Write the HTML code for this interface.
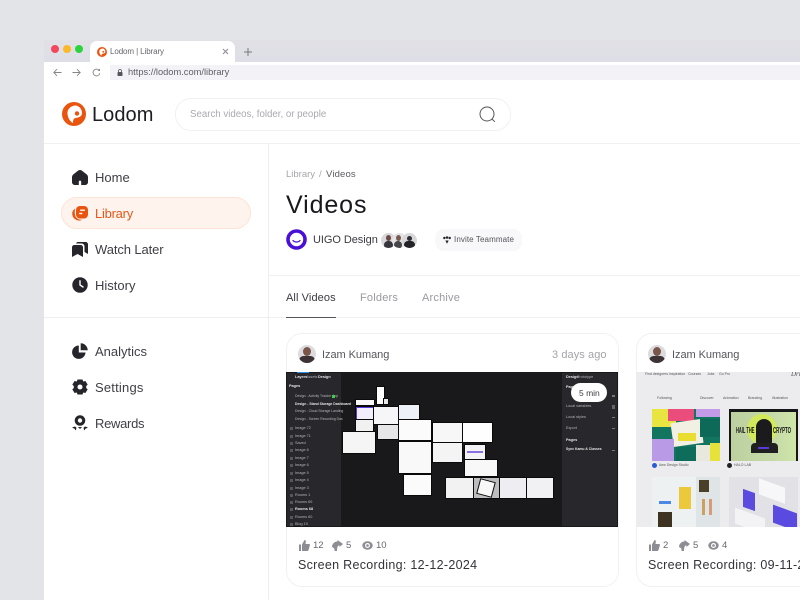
<!DOCTYPE html>
<html><head><meta charset="utf-8">
<style>
html,body{margin:0;padding:0}
body{width:800px;height:600px;overflow:hidden;position:relative;background:#e3e4e8;font-family:"Liberation Sans",sans-serif;color:#2a2a30}
.a{position:absolute}
.t{position:absolute;white-space:nowrap;line-height:1}
.nav{font-size:13px;color:#3e3e46}
.r{position:absolute;background:#fff}
svg{position:absolute;overflow:visible}
.av{position:absolute;border-radius:50%;overflow:hidden}
.w{position:absolute;background:#f9f9fa;box-shadow:0 0 0 1px #0a0a0b}
.m{position:absolute;white-space:nowrap;line-height:1;font-size:3.800px;color:#b5b5b9}
.b{color:#e4e4e6;font-weight:bold}
.i{position:absolute;left:4px;width:3px;height:3px;background:#55555a}
</style></head><body>
<div class="a" style="left:44px;top:40px;width:756px;height:23px;background:linear-gradient(#e0e0e5,#dedee6)"></div>
<div class="a" style="left:90px;top:41px;width:145px;height:22px;background:#fff;border-radius:7px 7px 0 0"></div>
<div class="a" style="left:51px;top:45px;width:8px;height:8px;border-radius:50%;background:#f4475b"></div>
<div class="a" style="left:63px;top:45px;width:8px;height:8px;border-radius:50%;background:#fbb829"></div>
<div class="a" style="left:75px;top:45px;width:8px;height:8px;border-radius:50%;background:#2bd43c"></div>
<svg style="left:97px;top:47px" width="10" height="10" viewBox="0 0 24 24"><circle cx="12" cy="12" r="12" fill="#e9540f"/><path d="M13 3.500C8 4 5 8 5.500 12 6 16 8 19.500 11 21c0-3 .5-4.500 2.500-5 3.500-.5 6.500-1.500 6.500-5 0-4-3-7.500-7-7.500z" fill="#fff"/><circle cx="15" cy="11.500" r="2.200" fill="#e9540f"/></svg>
<div class="t" style="left:110px;top:48px;font-size:8px;color:#66666c;letter-spacing:-.1px">Lodom | Library</div>
<svg style="left:222px;top:48px" width="7" height="7" viewBox="0 0 7 7"><path d="M1 1l5 5M6 1L1 6" stroke="#8a8a90" stroke-width="1"/></svg>
<svg style="left:244px;top:48px" width="8" height="8" viewBox="0 0 8 8"><path d="M4 0v8M0 4h8" stroke="#77777d" stroke-width="1"/></svg>

<div class="r" style="left:44px;top:62px;width:756px;height:538px"></div>
<div class="a" style="left:110px;top:65px;width:690px;height:15px;background:#f2f2f7"></div>
<svg style="left:53px;top:68px" width="9" height="9" viewBox="0 0 9 9"><path d="M8.500 4.500H.8M4 1.200L.8 4.500 4 7.800" fill="none" stroke="#85858b" stroke-width=".9"/></svg>
<svg style="left:72px;top:68px" width="9" height="9" viewBox="0 0 9 9"><path d="M.5 4.500h7.700M5 1.200l3.200 3.300L5 7.800" fill="none" stroke="#85858b" stroke-width=".9"/></svg>
<svg style="left:92px;top:68px" width="9" height="9" viewBox="0 0 9 9"><path d="M7.800 5.200A3.400 3.400 0 1 1 7 2.200" fill="none" stroke="#85858b" stroke-width=".9"/><path d="M8 .5v2.500H5.500z" fill="#85858b"/></svg>
<svg style="left:117px;top:69px" width="6" height="7" viewBox="0 0 6 7"><rect x=".5" y="3" width="5" height="4" rx=".8" fill="#55555c"/><path d="M1.500 3V2a1.500 1.500 0 0 1 3 0v1" fill="none" stroke="#55555c" stroke-width=".8"/></svg>
<div class="t" style="left:128px;top:68px;font-size:9.300px;color:#5e5e64">https://lodom.com/library</div>

<svg style="left:62px;top:102px" width="24" height="24" viewBox="0 0 24 24"><circle cx="12" cy="12" r="12" fill="#e9540f"/><path d="M13 3.500C8 4 5 8 5.500 12 6 16 8 19.500 11 21c0-3 .5-4.500 2.500-5 3.500-.5 6.500-1.500 6.500-5 0-4-3-7.500-7-7.500z" fill="#fff"/><circle cx="15" cy="11.500" r="2.200" fill="#e9540f"/></svg>
<div class="t" style="left:92px;top:105px;font-size:20px;color:#1c1c22;letter-spacing:.05px">Lodom</div>

<div class="a" style="left:175px;top:98px;width:336px;height:33px;box-sizing:border-box;border:1px solid #f1f1f5;border-radius:16px;background:#fff"></div>
<div class="t" style="left:190px;top:110px;font-size:9.700px;color:#a9a9b0">Search videos, folder, or people</div>
<svg style="left:479px;top:106px" width="17" height="17" viewBox="0 0 17 17"><circle cx="8" cy="8" r="7" fill="none" stroke="#55555b" stroke-width="1"/><path d="M13 13l2.800 2.800" stroke="#55555b" stroke-width="1"/></svg>

<div class="a" style="left:44px;top:143px;width:756px;height:1px;background:#f0f0f3"></div>
<div class="a" style="left:268px;top:144px;width:1px;height:456px;background:#eeeef2"></div>
<div class="a" style="left:44px;top:317px;width:224px;height:1px;background:#eeeef2"></div>

<svg style="left:72px;top:170px" width="16" height="15" viewBox="0 0 16 15"><path d="M8 0C6.800 0 5.800 .9 4.700 1.700L1.500 4.200C.5 5 0 6 0 7.200V12c0 1.800 1.200 3 3 3h3.800v-3.200a1.200 1.200 0 0 1 2.400 0V15H13c1.800 0 3-1.200 3-3V7.200c0-1.200-.5-2.200-1.500-3l-3.200-2.500C10.200 .9 9.200 0 8 0z" fill="#25252b"/></svg>
<div class="t nav" style="left:95px;top:171px">Home</div>

<div class="a" style="left:61px;top:197px;width:190px;height:32px;box-sizing:border-box;background:#fff4ed;border:1px solid #fde3d4;border-radius:16px"></div>
<svg style="left:72px;top:206px" width="16" height="15" viewBox="0 0 16 15"><rect x="4" y="0" width="12" height="12.500" rx="4" fill="#e9540f"/><path d="M3 2.500C1 4 0 6 .3 8.500.7 11.500 3 14 6.500 14.500c1.500.2 2.500 0 3.500-.7-3 0-5.300-1-6.500-3.300C2.500 8 2.700 5 3 2.500z" fill="#e9540f"/><rect x="8" y="3.500" width="5" height="1.400" rx=".7" fill="#fff"/><rect x="7" y="6.800" width="3.500" height="1.400" rx=".7" fill="#fff"/></svg>
<div class="t nav" style="left:95px;top:207px;color:#e4571b;letter-spacing:-.25px">Library</div>

<svg style="left:72px;top:242px" width="16" height="15" viewBox="0 0 16 15"><path d="M0 5.500C0 4 1 3 2.500 3h6C10 3 11 4 11 5.500V15l-5.500-3L0 15z" fill="#25252b"/><path d="M4 1.500C4.300.6 5 0 6 0h7.500C15 0 16 1 16 2.500V12l-3.500-2V4.500C12.500 2.700 11.300 1.500 9.500 1.500z" fill="#25252b"/></svg>
<div class="t nav" style="left:95px;top:243px;letter-spacing:-.1px">Watch Later</div>

<svg style="left:72px;top:277px" width="16" height="16" viewBox="0 0 16 16"><circle cx="8" cy="8" r="7.700" fill="#25252b"/><path d="M8 3.800V8l3 2" fill="none" stroke="#fff" stroke-width="1.400" stroke-linecap="round"/></svg>
<div class="t nav" style="left:95px;top:279px">History</div>

<svg style="left:72px;top:343px" width="16" height="16" viewBox="0 0 16 16"><path d="M6.800 2.500A6.700 6.700 0 1 0 13.500 9.500H6.800z" fill="#25252b"/><path d="M8.700 0.300a7 7 0 0 1 7 7H8.700z" fill="#25252b"/></svg>
<div class="t nav" style="left:95px;top:345px">Analytics</div>

<svg style="left:72px;top:379px" width="16" height="16" viewBox="0 0 16 16"><path d="M5.500 .5h5l.7 2 2.200-.5 2.300 3.600-1.500 1.400v2l1.500 1.400-2.300 3.600-2.200-.5-.7 2h-5l-.7-2-2.200.5L.3 10.400 1.800 9V7L.3 5.600 2.600 2l2.200.5z" fill="#25252b"/><circle cx="8" cy="8" r="2.500" fill="#fff"/></svg>
<div class="t nav" style="left:95px;top:381px;letter-spacing:.2px">Settings</div>

<svg style="left:72px;top:415px" width="16" height="16" viewBox="0 0 16 16"><circle cx="8" cy="5.500" r="5.300" fill="#25252b"/><circle cx="8" cy="5.500" r="2.200" fill="#fff"/><path d="M0 12.500l3-1 1.500 1.300-.7 2.700-1.300-1.700zM16 12.500l-3-1-1.500 1.300.7 2.700 1.300-1.700zM6 12h4l-2 2z" fill="#25252b"/></svg>
<div class="t nav" style="left:95px;top:417px;letter-spacing:-.3px">Rewards</div>

<div class="t" style="left:286px;top:170px;font-size:9.500px;color:#a6a6ad">Library</div>
<div class="t" style="left:319px;top:170px;font-size:9.500px;color:#a6a6ad">/</div>
<div class="t" style="left:326px;top:170px;font-size:9.500px;color:#5a5a61;letter-spacing:.15px">Videos</div>
<div class="t" style="left:286px;top:193px;font-size:25px;color:#18181d;letter-spacing:.9px">Videos</div>

<svg style="left:286px;top:229px" width="21" height="21" viewBox="0 0 21 21"><circle cx="10.500" cy="10.500" r="10.300" fill="#4a0fd6"/><circle cx="10.500" cy="10.500" r="6.700" fill="#fff"/><path d="M7 11.500c1.500 2 5.500 2 7 0" fill="none" stroke="#4a0fd6" stroke-width="1.200" stroke-linecap="round"/></svg>
<div class="t" style="left:313px;top:235px;font-size:11px;color:#3a3a41;letter-spacing:-.06px">UIGO Design</div>

<div class="av" style="left:381px;top:233px;width:15px;height:15px;background:#d9d8dc"><div class="a" style="left:5px;top:2px;width:5px;height:6px;border-radius:50%;background:#6a4a42"></div><div class="a" style="left:3px;top:8px;width:9px;height:8px;border-radius:4px;background:#35353b"></div></div>
<div class="av" style="left:392px;top:233px;width:15px;height:15px;background:#e6e5e6"><div class="a" style="left:4px;top:2px;width:5px;height:6px;border-radius:50%;background:#7a5a50"></div><div class="a" style="left:2px;top:8px;width:8px;height:8px;border-radius:4px;background:#45454a"></div></div>
<div class="av" style="left:402px;top:233px;width:15px;height:15px;background:#d8d8db"><div class="a" style="left:5px;top:3px;width:5px;height:5px;border-radius:50%;background:#2e2e33"></div><div class="a" style="left:2px;top:8px;width:11px;height:8px;border-radius:5px;background:#222227"></div></div>

<div class="a" style="left:435px;top:229px;width:87px;height:22px;background:#f8f8fa;border-radius:9px"></div>
<svg style="left:443px;top:236px" width="8" height="8" viewBox="0 0 8 8"><circle cx="1.300" cy="2" r="1.200" fill="#26262c"/><circle cx="4" cy="1.500" r="1.300" fill="#26262c"/><circle cx="6.700" cy="2" r="1.200" fill="#26262c"/><path d="M2.300 4.500h3.400L4 7.800z" fill="#26262c"/></svg>
<div class="t" style="left:454px;top:236px;font-size:8px;color:#55555c;letter-spacing:.1px">Invite Teammate</div>

<div class="a" style="left:269px;top:275px;width:531px;height:1px;background:#f1f1f4"></div>
<div class="t" style="left:286px;top:293px;font-size:11px;color:#3a3a41;letter-spacing:.1px">All Videos</div>
<div class="t" style="left:360px;top:293px;font-size:11px;color:#9a9aa1;letter-spacing:.2px">Folders</div>
<div class="t" style="left:422px;top:293px;font-size:11px;color:#9a9aa1;letter-spacing:.2px">Archive</div>
<div class="a" style="left:269px;top:317px;width:531px;height:1px;background:#f1f1f4"></div>
<div class="a" style="left:286px;top:316.500px;width:50px;height:1.500px;background:#55555c"></div>

<!-- card 1 -->
<div class="a" style="left:286px;top:333px;width:333px;height:254px;box-sizing:border-box;border:1px solid #f1f1f4;border-radius:16px;background:#fff"></div>
<div class="av" style="left:298px;top:345px;width:18px;height:18px;background:#dcdbe0"><div class="a" style="left:5px;top:2px;width:8px;height:9px;border-radius:50%;background:#7a5648"></div><div class="a" style="left:1px;top:11px;width:16px;height:9px;border-radius:6px;background:#3d3236"></div></div>
<div class="t" style="left:322px;top:350px;font-size:11px;color:#55555c;letter-spacing:-.05px">Izam Kumang</div>
<div class="t" style="left:552px;top:350px;font-size:11px;color:#a3a3aa;letter-spacing:.08px">3 days ago</div>

<div class="a" style="left:286px;top:372px;width:332px;height:155px;background:#19191b;overflow:hidden;filter:blur(.35px)">
 <div class="a" style="left:1px;top:1px;width:54px;height:153px;background:#28282c"></div>
 <div class="a" style="left:276px;top:1px;width:55px;height:153px;background:#28282c"></div>
 <div class="a" style="left:11px;top:0;width:12px;height:1px;background:#2a8de0"></div>
 <div class="m b" style="left:9px;top:4px">Layers</div><div class="m" style="left:20px;top:4px">Assets</div><div class="m b" style="left:32px;top:4px">Design</div>
 <div class="m b" style="left:3px;top:13px">Pages</div>
 <div class="m" style="left:9px;top:23px;font-size:3.400px">Design - Activity Tracker App</div>
 <div class="a" style="left:46px;top:23px;width:3px;height:3px;background:#3ecf4a"></div>
 <div class="m b" style="left:9px;top:31px;font-size:3.400px">Design - Stand Storage Dashboard</div>
 <div class="m" style="left:9px;top:38px;font-size:3.400px">Design - Cloud Storage Landing</div>
 <div class="m" style="left:9px;top:46px;font-size:3.400px">Design - Screen Recording Das</div>
 <div class="m" style="left:9px;top:55px">Image 72</div><div class="i" style="top:55px"></div>
 <div class="m" style="left:9px;top:63px">Image 71</div><div class="i" style="top:63px"></div>
 <div class="m" style="left:9px;top:70px">Saved</div><div class="i" style="top:70px"></div>
 <div class="m" style="left:9px;top:77px">Image 6</div><div class="i" style="top:77px"></div>
 <div class="m" style="left:9px;top:85px">Image 7</div><div class="i" style="top:85px"></div>
 <div class="m" style="left:9px;top:92px">Image 6</div><div class="i" style="top:92px"></div>
 <div class="m" style="left:9px;top:100px">Image 5</div><div class="i" style="top:100px"></div>
 <div class="m" style="left:9px;top:107px">Image 4</div><div class="i" style="top:107px"></div>
 <div class="m" style="left:9px;top:115px">Image 3</div><div class="i" style="top:115px"></div>
 <div class="m" style="left:9px;top:122px">Rooms 1</div><div class="i" style="top:122px"></div>
 <div class="m" style="left:9px;top:129px">Rooms 69</div><div class="i" style="top:129px"></div>
 <div class="m b" style="left:9px;top:136px">Rooms 68</div><div class="i" style="top:136px"></div>
 <div class="m" style="left:9px;top:144px">Rooms 60</div><div class="i" style="top:144px"></div>
 <div class="m" style="left:9px;top:151px">Blog 19</div><div class="i" style="top:151px"></div>

 <!-- frames: positions relative to thumbnail -->
 <div class="w" style="left:70px;top:28px;width:18px;height:5px"></div>
 <div class="w" style="left:91px;top:15px;width:7px;height:17px;background:#fff"></div>
 <div class="w" style="left:98px;top:27px;width:4px;height:5px;background:#e8e8e8"></div>
 <div class="w" style="left:70px;top:35px;width:17px;height:13px;background:#f3eefc;border-top:1.500px solid #5a3ad8;border-left:1px solid #5a3ad8;box-sizing:border-box"></div>
 <div class="w" style="left:70px;top:48px;width:17px;height:12px;background:#f1f1f2"></div>
 <div class="w" style="left:57px;top:60px;width:32px;height:21px;background:#f5f5f6"></div>
 <div class="w" style="left:88px;top:35px;width:24px;height:17px;background:#f6f6f8"></div>
 <div class="w" style="left:92px;top:53px;width:20px;height:14px;background:#e6e6e8"></div>
 <div class="w" style="left:113px;top:33px;width:20px;height:14px;background:#eef1f8"></div>
 <div class="w" style="left:113px;top:48px;width:32px;height:20px;background:#fbfbfc"></div>
 <div class="w" style="left:113px;top:70px;width:32px;height:31px;background:#f9f9f9"></div>
 <div class="w" style="left:118px;top:103px;width:27px;height:20px;background:#fbfbfb"></div>
 <div class="w" style="left:147px;top:51px;width:29px;height:19px;background:#f7f7f8"></div>
 <div class="w" style="left:177px;top:51px;width:29px;height:19px;background:#fefefe"></div>
 <div class="w" style="left:147px;top:71px;width:29px;height:19px;background:#f4f4f5"></div>
 <div class="w" style="left:179px;top:73px;width:20px;height:15px;background:#f3f3f6"></div>
 <div class="a" style="left:181px;top:79px;width:16px;height:2px;background:#8a6fe0"></div>
 <div class="w" style="left:179px;top:88px;width:32px;height:16px;background:#f8f8f8"></div>
 <div class="w" style="left:160px;top:106px;width:27px;height:20px;background:#f2f2f3"></div>
 <div class="w" style="left:188px;top:106px;width:25px;height:20px;background:#bdbdc0"></div>
 <div class="w" style="left:193px;top:109px;width:14px;height:14px;background:#f8f8f8;transform:rotate(15deg)"></div>
 <div class="w" style="left:214px;top:106px;width:27px;height:20px;background:#eeeef2"></div>
 <div class="w" style="left:241px;top:106px;width:26px;height:20px;background:#f1f1f3"></div>

 <div class="m b" style="left:280px;top:4px">Design</div><div class="m" style="left:291px;top:4px">Prototype</div>
 <div class="m b" style="left:280px;top:14px">Page</div>
 <div class="m" style="left:280px;top:33px">Local variables</div>
 <div class="m" style="left:280px;top:44px">Local styles</div>
 <div class="m" style="left:280px;top:55px">Export</div>
 <div class="m b" style="left:280px;top:67px">Pages</div>
 <div class="m b" style="left:280px;top:76px;font-size:3.400px">Sync Kamu &amp; Classes</div>
 <div class="a" style="left:326px;top:23px;width:3px;height:2px;background:#777"></div>
 <div class="a" style="left:326px;top:33px;width:3px;height:4px;background:#666"></div>
 <div class="a" style="left:326px;top:45px;width:3px;height:1px;background:#777"></div>
 <div class="a" style="left:326px;top:56px;width:3px;height:1px;background:#777"></div>
 <div class="a" style="left:326px;top:78px;width:3px;height:1px;background:#777"></div>
</div>
<div class="a" style="left:571px;top:383px;width:36px;height:19px;background:#fff;border-radius:10px"></div>
<div class="t" style="left:579px;top:389px;font-size:8.500px;color:#3d3d44">5 min</div>

<svg style="left:299px;top:540px" width="11" height="11" viewBox="0 0 11 11"><path d="M0 4.500h2V11H0zM3 4.500L5.500 0c1 0 1.500.8 1.300 1.800L6.500 4H10c.8 0 1.100.7.900 1.300L9.500 10c-.2.600-.6 1-1.300 1H3z" fill="#8d8d94"/></svg>
<div class="t" style="left:313px;top:541px;font-size:9.500px;color:#66666d">12</div>
<svg style="left:332px;top:540px" width="11" height="11" viewBox="0 0 11 11"><path d="M0 7A5.500 5.500 0 0 1 5.500 1.500V0L11 4 7.500 7V5.500C6 5 5 7 5 11H2.500C2.800 9.500 2.500 8 0 7z" fill="#8d8d94"/></svg>
<div class="t" style="left:346px;top:541px;font-size:9.500px;color:#66666d">5</div>
<svg style="left:362px;top:541px" width="11" height="9" viewBox="0 0 11 9"><ellipse cx="5.500" cy="4.500" rx="5.200" ry="4.200" fill="#8d8d94"/><circle cx="5.500" cy="4.500" r="2.500" fill="#fff"/><circle cx="5.500" cy="4.500" r="1.300" fill="#8d8d94"/></svg>
<div class="t" style="left:376px;top:541px;font-size:9.500px;color:#66666d">10</div>
<div class="t" style="left:298px;top:559px;font-size:12.500px;color:#33333a;letter-spacing:.3px">Screen Recording: 12-12-2024</div>

<!-- card 2 -->
<div class="a" style="left:636px;top:333px;width:190px;height:254px;box-sizing:border-box;border:1px solid #f1f1f4;border-radius:16px;background:#fff"></div>
<div class="av" style="left:648px;top:345px;width:18px;height:18px;background:#dcdbe0"><div class="a" style="left:5px;top:2px;width:8px;height:9px;border-radius:50%;background:#7a5648"></div><div class="a" style="left:1px;top:11px;width:16px;height:9px;border-radius:6px;background:#3d3236"></div></div>
<div class="t" style="left:672px;top:350px;font-size:11px;color:#55555c;letter-spacing:-.05px">Izam Kumang</div>

<div class="a" style="left:636px;top:372px;width:164px;height:155px;background:#ececef;overflow:hidden;filter:blur(.35px)">
 <div class="t" style="left:9px;top:1px;font-size:3.500px;color:#555">Find designers</div>
 <div class="t" style="left:33px;top:1px;font-size:3.500px;color:#555">Inspiration</div>
 <div class="t" style="left:52px;top:1px;font-size:3.500px;color:#555">Courses</div>
 <div class="t" style="left:71px;top:1px;font-size:3.500px;color:#555">Jobs</div>
 <div class="t" style="left:83px;top:1px;font-size:3.500px;color:#555">Go Pro</div>
 <div class="t" style="left:155px;top:-1px;font-size:7px;font-family:'Liberation Serif',serif;font-style:italic;color:#555">Dri</div>
 <div class="t" style="left:21px;top:25px;font-size:3.500px;color:#555">Following</div>
 <div class="t" style="left:64px;top:25px;font-size:3.500px;color:#555">Discover</div>
 <div class="t" style="left:87px;top:25px;font-size:3.500px;color:#555">Animation</div>
 <div class="t" style="left:112px;top:25px;font-size:3.500px;color:#555">Branding</div>
 <div class="t" style="left:136px;top:25px;font-size:3.500px;color:#555">Illustration</div>
 <div class="a" style="left:16px;top:37px;width:68px;height:52px;background:#12755f;overflow:hidden">
  <div class="a" style="left:0;top:0;width:24px;height:18px;background:#e8e440"></div>
  <div class="a" style="left:16px;top:0;width:26px;height:12px;background:#ea4d7c"></div>
  <div class="a" style="left:44px;top:0;width:24px;height:8px;background:#c39be8"></div>
  <div class="a" style="left:20px;top:12px;width:30px;height:24px;background:#f2efe3;transform:rotate(-8deg)"></div>
  <div class="a" style="left:26px;top:24px;width:18px;height:8px;background:#e9dd2f"></div>
  <div class="a" style="left:48px;top:10px;width:20px;height:18px;background:#0d6a58"></div>
  <div class="a" style="left:0;top:30px;width:22px;height:22px;background:#b89ae6"></div>
  <div class="a" style="left:24px;top:38px;width:22px;height:14px;background:#0e6d5a"></div>
  <div class="a" style="left:44px;top:36px;width:24px;height:16px;background:#e8e8dc"></div>
  <div class="a" style="left:58px;top:34px;width:10px;height:18px;background:#e7e23a"></div>
 </div>
 <div class="a" style="left:16px;top:91px;width:5px;height:5px;border-radius:50%;background:#2a5bd8"></div>
 <div class="t" style="left:23px;top:92px;font-size:3.500px;color:#555">Aew Design Studio</div>
 <div class="a" style="left:93px;top:37px;width:69px;height:52px;background:#151618;overflow:hidden">
  <div class="a" style="left:2px;top:3px;width:65px;height:49px;background:linear-gradient(90deg,#bed0a0,#c4d8a8 60%,#cfe6a8)"></div>
  <div class="a" style="left:18px;top:5px;width:30px;height:30px;border-radius:50%;background:#d6ee4a;opacity:.8"></div>
  <div class="a" style="left:27px;top:10px;width:16px;height:26px;border-radius:8px 8px 3px 3px;background:#1b1b1d"></div>
  <div class="a" style="left:22px;top:34px;width:27px;height:10px;border-radius:4px 4px 0 0;background:#1f1f22"></div>
  <div class="t" style="left:7px;top:18px;font-size:8px;font-weight:bold;color:#141414;transform:scaleX(.5);transform-origin:left">HAIL THE</div>
  <div class="t" style="left:44px;top:18px;font-size:8px;font-weight:bold;color:#141414;transform:scaleX(.55);transform-origin:left">CRYPTO</div>
  <div class="a" style="left:29px;top:38px;width:11px;height:2px;background:#5a3ad8"></div>
 </div>
 <div class="a" style="left:91px;top:91px;width:5px;height:5px;border-radius:50%;background:#222"></div>
 <div class="t" style="left:98px;top:92px;font-size:3.500px;color:#555">HALO LAB</div>
 <div class="a" style="left:16px;top:105px;width:68px;height:50px;background:#dfe5e6;overflow:hidden">
  <div class="a" style="left:0;top:0;width:44px;height:50px;background:#eef1f2"></div>
  <div class="a" style="left:27px;top:10px;width:12px;height:22px;background:#ecc93a"></div>
  <div class="a" style="left:7px;top:24px;width:12px;height:3px;background:#4a8ae6"></div>
  <div class="a" style="left:6px;top:35px;width:14px;height:15px;background:#3d3320"></div>
  <div class="a" style="left:47px;top:3px;width:10px;height:12px;background:#4a4028"></div>
  <div class="a" style="left:50px;top:22px;width:3px;height:16px;background:#cba061"></div>
  <div class="a" style="left:57px;top:22px;width:3px;height:16px;background:#d89b7a"></div>
 </div>
 <div class="a" style="left:93px;top:105px;width:69px;height:50px;background:#e2e2e6;overflow:hidden">
  <div class="a" style="left:14px;top:14px;width:12px;height:18px;background:#5b4adf;transform:skewY(20deg)"></div>
  <div class="a" style="left:44px;top:32px;width:24px;height:18px;background:#5b4adf;transform:skewY(20deg)"></div>
  <div class="a" style="left:30px;top:6px;width:26px;height:16px;background:#f7f7f9;transform:skewY(20deg)"></div>
  <div class="a" style="left:6px;top:36px;width:30px;height:16px;background:#f3f3f5;transform:skewY(20deg)"></div>
 </div>
</div>

<svg style="left:649px;top:540px" width="11" height="11" viewBox="0 0 11 11"><path d="M0 4.500h2V11H0zM3 4.500L5.500 0c1 0 1.500.8 1.300 1.800L6.500 4H10c.8 0 1.100.7.900 1.300L9.500 10c-.2.600-.6 1-1.300 1H3z" fill="#8d8d94"/></svg>
<div class="t" style="left:663px;top:541px;font-size:9.500px;color:#66666d">2</div>
<svg style="left:679px;top:540px" width="11" height="11" viewBox="0 0 11 11"><path d="M0 7A5.500 5.500 0 0 1 5.500 1.500V0L11 4 7.500 7V5.500C6 5 5 7 5 11H2.500C2.800 9.500 2.500 8 0 7z" fill="#8d8d94"/></svg>
<div class="t" style="left:693px;top:541px;font-size:9.500px;color:#66666d">5</div>
<svg style="left:708px;top:541px" width="11" height="9" viewBox="0 0 11 9"><ellipse cx="5.500" cy="4.500" rx="5.200" ry="4.200" fill="#8d8d94"/><circle cx="5.500" cy="4.500" r="2.500" fill="#fff"/><circle cx="5.500" cy="4.500" r="1.300" fill="#8d8d94"/></svg>
<div class="t" style="left:722px;top:541px;font-size:9.500px;color:#66666d">4</div>
<div class="t" style="left:648px;top:559px;font-size:12.500px;color:#33333a;letter-spacing:.3px">Screen Recording: 09-11-2024</div>
</body></html>
